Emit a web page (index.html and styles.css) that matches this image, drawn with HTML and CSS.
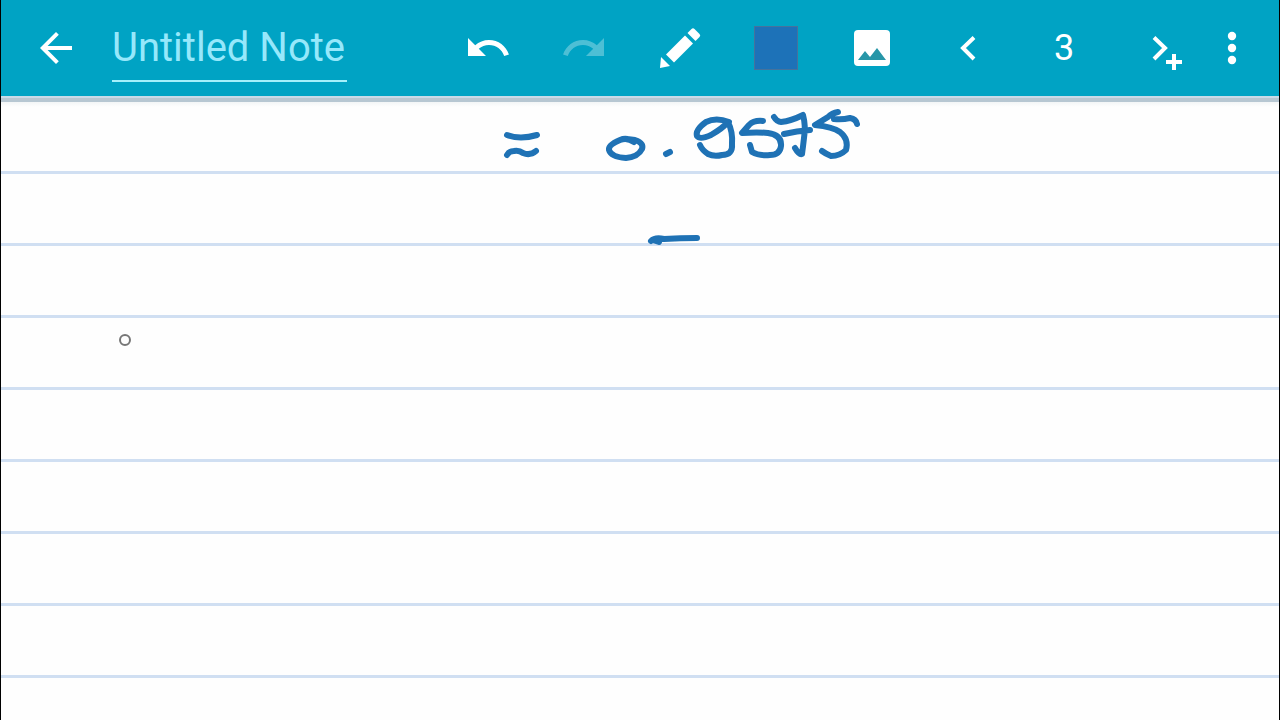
FILE: index.html
```html
<!DOCTYPE html>
<html lang="en">
<head>
  <meta charset="utf-8">
  <title>Untitled Note</title>
  <link rel="stylesheet" href="styles.css">
</head>
<body>
  <header class="toolbar">
    <button class="tool back" aria-label="Back">
      <svg class="icon" viewBox="0 0 24 24"><path d="M20 11H7.8l5.6-5.6L12 4l-8 8 8 8 1.4-1.4L7.8 13H20z"/></svg>
    </button>
    <input class="title" type="text" placeholder="Untitled Note" aria-label="Note title">

    <div class="actions">
      <button class="tool" aria-label="Undo">
        <svg class="icon" viewBox="0 0 24 24"><path d="M12.5 8c-2.65 0-5.05.99-6.9 2.6L2 7v9h9l-3.62-3.62c1.39-1.16 3.16-1.88 5.12-1.88 3.54 0 6.55 2.31 7.6 5.5l2.37-.78C21.08 11.03 17.15 8 12.5 8z"/></svg>
      </button>
      <button class="tool" aria-label="Redo" disabled>
        <svg class="icon" viewBox="0 0 24 24"><path d="M11.5 8c2.65 0 5.05.99 6.9 2.6L22 7v9h-9l3.62-3.62c-1.39-1.16-3.16-1.88-5.12-1.88-3.54 0-6.55 2.31-7.6 5.5l-2.37-.78C2.92 11.03 6.85 8 11.5 8z"/></svg>
      </button>
      <button class="tool" aria-label="Pen">
        <svg class="icon" viewBox="0 0 48 48">
          <path d="M5 33l9 9-10 2z"/>
          <path d="M10 30.500l19-19 8 8-19 19z"/>
          <path d="M31.500 9l4-4q1.500-1.500 3 0l5 5q1.500 1.500 0 3l-4 4z"/>
        </svg>
      </button>
      <button class="tool" aria-label="Pen colour"><span class="swatch"></span></button>
      <button class="tool" aria-label="Insert image">
        <svg class="icon" viewBox="0 0 48 48">
          <rect x="6" y="6" width="36" height="36" rx="4"/>
          <path class="hills" d="M10 36l7-9 5 6 7-9 9 12z"/>
        </svg>
      </button>
      <button class="tool" aria-label="Previous page">
        <svg class="icon line" viewBox="0 0 48 48"><path d="M30 13.500L19 24l11 11"/></svg>
      </button>
      <span class="tool page">3</span>
      <button class="tool" aria-label="Add page">
        <svg class="icon line" viewBox="0 0 48 48"><path d="M18 13.500L29 24 18 35M30 38h16M38 30v16"/></svg>
      </button>
      <button class="tool more" aria-label="More options">
        <svg class="icon" viewBox="0 0 24 24"><circle cx="12" cy="6" r="2.100"/><circle cx="12" cy="12" r="2.100"/><circle cx="12" cy="18" r="2.100"/></svg>
      </button>
    </div>
  </header>

  <main class="paper">
    <svg class="ink" viewBox="1 96 900 280" role="img" aria-label="≈ 0.9575">
      <!-- approx sign -->
      <path d="M507 135Q520 140 537 135M507 155Q509 151 514 151Q519 150 523 153Q530 156 536 151"/>
      <!-- zero and point -->
      <path d="M634 142Q627 137 620 140Q608 145 609 150Q611 157 626 158Q638 157 642 149Q644 143 635 140L627 139M666 154L670 152"/>
      <!-- 9 -->
      <path d="M729 122Q716 117 706 122Q695 130 697 136Q700 140 711 135Q723 128 728 122Q733 132 732 144Q733 155 722 155Q714 157 708 154Q702 150 700 145"/>
      <!-- 5 -->
      <path d="M763 121Q754 120 749 125L742 133Q758 132 768 133Q782 135 781 146Q780 155 770 155Q759 156 752 152L750 145"/>
      <!-- 7 -->
      <path d="M774 117Q777 122 781 122Q791 121 803 115Q806 126 804 138Q803 147 802 154Q799 155 795 148M784 134Q797 131 810 130"/>
      <!-- 5 -->
      <path d="M857 124Q856 119 850 118Q842 120 834 119M838 112Q832 113 828 117L815 125Q833 127 840 132Q849 139 846 150Q840 156 831 156Q826 154 822 151"/>
      <!-- underline -->
      <path d="M651 241Q655 237 664 239Q680 238 697 238M653 240L659 242"/>
      <circle class="pointer" cx="125" cy="340" r="5"/>
    </svg>
  </main>
</body>
</html>
```
FILE: styles.css
```css
* {
  box-sizing: border-box;
}
body {
  margin: 0;
  min-height: 100vh;
  display: flex;
  flex-direction: column;
  border: solid #000;
  border-width: 0 1px;
  background: #fff;
  font-family: Roboto, sans-serif;
}

/* toolbar */
.toolbar {
  display: flex;
  align-items: center;
  height: 96px;
  padding: 0 23px 0 7px;
  background: #00a3c4;
}
.tool {
  display: flex;
  flex: none;
  align-items: center;
  justify-content: center;
  width: 96px;
  height: 96px;
  padding: 0;
  border: 0;
  background: none;
  color: #fff;
}
.tool:disabled {
  opacity: .3;
}
.icon {
  width: 48px;
  height: 48px;
  fill: currentColor;
}
.line {
  fill: none;
  stroke: currentColor;
  stroke-width: 4;
}
.hills {
  fill: #2796a8;
}
.title {
  width: 235px;
  height: 68px;
  margin: 0 0 0 8px;
  padding: 0;
  border: 0;
  border-bottom: 2px solid #a5f0fb;
  outline: none;
  background: none;
  color: #fff;
  font: 40px Roboto, sans-serif;
}
.title::placeholder {
  color: #96e8fb;
  opacity: 1;
}
.actions {
  display: flex;
  margin-left: auto;
}
.swatch {
  width: 44px;
  height: 44px;
  border: 1px solid #46729c;
  background: #1d72b8;
}
.page {
  font-size: 36px;
}
.more {
  width: 48px;
}

/* ruled paper */
.paper {
  position: relative;
  flex: 1;
  border-top: 2px solid #c9dbe8;
  background:
    linear-gradient(#b7c7d2 4px, #f3f6f7 4px, transparent 9px),
    repeating-linear-gradient(#fefefe 0 73px, #d0dff2 73px 76px, #fefefe 76px 145px);
  background:
    linear-gradient(#b7c7d2 4px, #f3f6f7 4px, transparent 9px) no-repeat,
    repeating-linear-gradient(#d0dff2 0 3px, #fefefe 3px 72px) 0 1px;
}
.ink {
  position: absolute;
  top: -2px;
  left: 0;
  width: 900px;
  height: 280px;
  fill: none;
  stroke: #1f72b5;
  stroke-width: 6;
  stroke-linecap: round;
  stroke-linejoin: round;
}
.pointer {
  stroke: #777;
  stroke-width: 2;
}
```
